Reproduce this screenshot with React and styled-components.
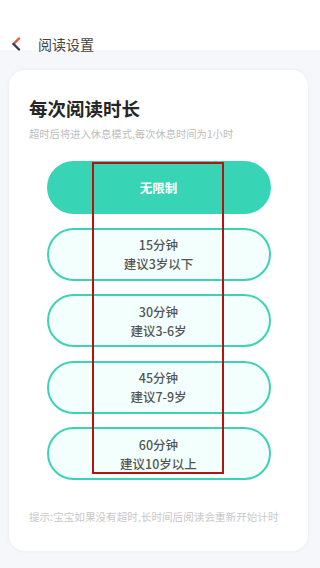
import React from "react";
import styled, { createGlobalStyle } from "styled-components";

const Global = createGlobalStyle`
  html, body { margin: 0; padding: 0; }
  body {
    width: 320px; height: 568px; overflow: hidden;
    background: #f5f7fa;
    font-family: "Noto Sans CJK SC", "Noto Sans", sans-serif;
  }
`;

const Page = styled.div`
  position: relative;
  width: 320px;
  height: 568px;
  background: #f5f7fa;
  display: flex;
  flex-direction: column;
`;

const Header = styled.div`
  height: 50px;
  background: #fff;
  padding: 34px 0 0 11px;
  box-sizing: border-box;
`;

const HeaderInner = styled.div`
  display: flex;
  align-items: center;
  height: 20px;
`;

const Title = styled.div`
  margin-left: 17px;
  font-size: 14px;
  color: #444;
  line-height: 20px;
`;

const Card = styled.div`
  margin: 20px 12px 0 9px;
  height: 481px;
  background: #fff;
  border-radius: 16px;
  box-shadow: 0 0 4px rgba(0, 0, 0, 0.06);
  padding: 25px 20px 0 20px;
  box-sizing: border-box;
  display: flex;
  flex-direction: column;
`;

const H1 = styled.div`
  font-size: 18.5px;
  font-weight: 700;
  color: #262626;
  line-height: 26px;
`;

const Sub = styled.div`
  margin-top: 6px;
  font-size: 10.3px;
  color: #bdbdbd;
  line-height: 14px;
  white-space: nowrap;
`;

const List = styled.div`
  margin-top: 20px;
  display: flex;
  flex-direction: column;
  align-items: center;
  gap: 13.5px;
`;

const Option = styled.div`
  width: 224px;
  height: 53px;
  border-radius: 27px;
  box-sizing: border-box;
  display: flex;
  flex-direction: column;
  align-items: center;
  justify-content: center;
  background: ${p => (p.$active ? "#37d4b6" : "#f3fffd")};
  border: ${p => (p.$active ? "none" : "2px solid #3dd2b5")};
  color: ${p => (p.$active ? "#fff" : "#555")};
  font-size: 12.5px;
  font-weight: ${p => (p.$active ? 700 : 500)};
  line-height: 19px;
`;

const Hint = styled.div`
  margin-top: 30px;
  font-size: 10.6px;
  color: #c8c8c8;
  line-height: 14px;
  white-space: nowrap;
`;

const Mark = styled.div`
  position: absolute;
  left: 92px;
  top: 162px;
  width: 132px;
  height: 312px;
  border: 2.5px solid #b3140f;
  box-sizing: border-box;
  pointer-events: none;
`;

const Back = () => (
  <svg width="10" height="14" viewBox="0 0 10 14">
    <path d="M8 1.5 L2.5 7" stroke="#e4553c" strokeWidth="2.4" fill="none" strokeLinecap="round" />
    <path d="M2.5 7 L8 12.5" stroke="#2c3e5c" strokeWidth="2.4" fill="none" strokeLinecap="round" />
  </svg>
);

const options = [
  { a: "无限制", active: true },
  { a: "15分钟", b: "建议3岁以下" },
  { a: "30分钟", b: "建议3-6岁" },
  { a: "45分钟", b: "建议7-9岁" },
  { a: "60分钟", b: "建议10岁以上" },
];

export default function App() {
  return (
    <Page>
      <Global />
      <Header>
        <HeaderInner>
          <Back />
          <Title>阅读设置</Title>
        </HeaderInner>
      </Header>
      <Card>
        <H1>每次阅读时长</H1>
        <Sub>超时后将进入休息模式,每次休息时间为1小时</Sub>
        <List>
          {options.map(o => (
            <Option key={o.a} $active={o.active}>
              <span>{o.a}</span>
              {o.b && <span>{o.b}</span>}
            </Option>
          ))}
        </List>
        <Hint>提示:宝宝如果没有超时,长时间后阅读会重新开始计时</Hint>
      </Card>
      <Mark />
    </Page>
  );
}
